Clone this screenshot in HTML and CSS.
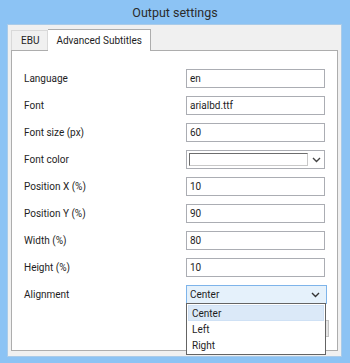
FILE: index.html
```html
<!DOCTYPE html>
<html lang="en">
<head>
  <meta charset="UTF-8" />
  <title>Output settings</title>
  <link rel="stylesheet" href="styles.css">
</head>
<body>
  <div class="window">
    <div class="title-bar">Output settings</div>

    <div class="content">
      <div class="tabs">
        <div class="tab">EBU</div>
        <div class="tab active">Advanced Subtitles</div>
      </div>

      <div class="panel">
        <div class="row">
          <label>Language</label>
          <div class="field">en</div>
        </div>
        <div class="row">
          <label>Font</label>
          <div class="field">arialbd.ttf</div>
        </div>
        <div class="row">
          <label>Font size (px)</label>
          <div class="field">60</div>
        </div>
        <div class="row">
          <label>Font color</label>
          <div class="field color-picker">
            <span class="swatch"></span>
            <span class="chevron">
              <svg width="9" height="6" viewBox="0 0 9 6"><path d="M1 1 L4.5 4.5 L8 1" fill="none" stroke="#444" stroke-width="1.4"/></svg>
            </span>
          </div>
        </div>
        <div class="row">
          <label>Position X (%)</label>
          <div class="field">10</div>
        </div>
        <div class="row">
          <label>Position Y (%)</label>
          <div class="field">90</div>
        </div>
        <div class="row">
          <label>Width (%)</label>
          <div class="field">80</div>
        </div>
        <div class="row">
          <label>Height (%)</label>
          <div class="field">10</div>
        </div>
        <div class="row">
          <label>Alignment</label>
          <div class="combo-wrap">
            <div class="field combo open">
              <span>Center</span>
              <span class="chevron">
                <svg width="9" height="6" viewBox="0 0 9 6"><path d="M1 1 L4.5 4.5 L8 1" fill="none" stroke="#333" stroke-width="1.4"/></svg>
              </span>
            </div>
            <ul class="dropdown">
              <li class="selected">Center</li>
              <li>Left</li>
              <li>Right</li>
            </ul>
          </div>
        </div>

        <div class="button-row">
          <button class="ghost-btn"></button>
        </div>
      </div>
    </div>
  </div>
</body>
</html>
```

FILE: styles.css
```css
:root {
  --frame-color: #8cc3f4;
  --face-color: #f0f0f0;
  --border-color: #adadad;
  --input-border: #abadb3;
  --text-color: #1e1e1e;
  --hover-bg: #e5f1fb;
  --hover-border: #7eb4ea;
}

* {
  box-sizing: border-box;
}

body {
  margin: 0;
  font-family: Roboto, Lato, sans-serif;
  font-size: 10px;
  color: var(--text-color);
  background-color: var(--frame-color);
}

.window {
  width: 350px;
  height: 363px;
  display: flex;
  flex-direction: column;
}

.title-bar {
  height: 24px;
  line-height: 26px;
  text-align: center;
  font-size: 12.5px;
  color: #2b2b2b;
}

.content {
  flex: 1;
  margin: 0 8px 6px 7px;
  padding: 4px 3px 5px 3px;
  background-color: var(--face-color);
  border: 1px solid #a9cbe9;
  display: flex;
  flex-direction: column;
}

/* Tabs */
.tabs {
  display: flex;
  align-items: flex-end;
  height: 21px;
  position: relative;
  z-index: 1;
}

.tab {
  height: 20px;
  line-height: 19px;
  padding: 0 8px 0 9px;
  border: 1px solid #d9d9d9;
  border-bottom: none;
  background-color: var(--face-color);
}

.tab.active {
  height: 22px;
  line-height: 21px;
  margin-bottom: -1px;
  padding: 0 8px 0 8px;
  background-color: white;
  border-color: var(--border-color);
  border-left: none;
}

.panel {
  flex: 1;
  background: white;
  border: 1px solid var(--border-color);
  padding: 18px 12px 0 12px;
  position: relative;
}

/* Form rows */
.row {
  display: flex;
  align-items: center;
  height: 19px;
  margin-bottom: 8px;
}

.row label {
  width: 162px;
  flex-shrink: 0;
}

.field {
  width: 141px;
  height: 19px;
  border: 1px solid var(--input-border);
  padding: 0 3px;
  line-height: 17px;
  background: white;
}

.color-picker {
  display: flex;
  align-items: center;
  padding: 0 0 0 2px;
}

.swatch {
  width: 119px;
  height: 13px;
  border: 1px solid #6d6d6d;
  border-right-color: #c8c8c8;
  border-bottom-color: #c8c8c8;
  background: white;
}

.chevron {
  flex: 1;
  display: flex;
  justify-content: center;
  align-items: center;
  height: 100%;
}

/* Combobox */
.combo-wrap {
  position: relative;
}

.combo {
  display: flex;
  align-items: center;
}

.combo span:first-child {
  width: 117px;
}

.combo.open {
  background-color: var(--hover-bg);
  border-color: var(--hover-border);
}

.dropdown {
  position: absolute;
  top: 18px;
  left: 0;
  width: 140px;
  margin: 0;
  padding: 1px;
  list-style: none;
  background: white;
  border: 1px solid #646464;
  z-index: 2;
}

.dropdown li {
  height: 16px;
  line-height: 15px;
  padding: 0 3px;
  border: 1px solid transparent;
}

.dropdown li.selected {
  background-color: #dbe9f8;
  border-color: #cfe1f5;
}

.button-row {
  display: flex;
  justify-content: flex-end;
  margin-top: 16px;
  margin-right: -4px;
}

.ghost-btn {
  width: 75px;
  height: 17px;
  background: #e5e5e5;
  border: 1px solid #c3c3c3;
}
```
